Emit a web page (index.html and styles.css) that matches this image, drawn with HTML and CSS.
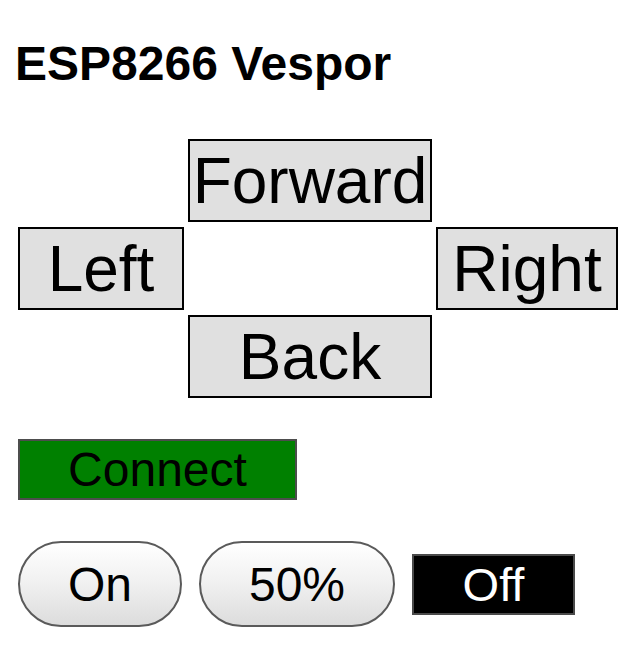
FILE: index.html
```html
<!DOCTYPE html>
<html>
<head>
<meta charset="utf-8">
<title>ESP8266 Vespor</title>
<link rel="stylesheet" href="styles.css">
</head>
<body>
<h1 class="title">ESP8266 Vespor</h1>
<div class="dpad">
  <span class="cell"></span>
  <button class="dir">Forward</button>
  <span class="cell"></span>
  <button class="dir">Left</button>
  <span class="cell"></span>
  <button class="dir">Right</button>
  <span class="cell"></span>
  <button class="dir">Back</button>
  <span class="cell"></span>
</div>
<button class="connect">Connect</button>
<div class="row">
  <button class="pill pill-on">On</button>
  <button class="pill pill-half">50%</button>
  <button class="off">Off</button>
</div>
</body>
</html>
```
FILE: styles.css
```css
html, body {
  margin: 0;
  padding: 0;
  background: #ffffff;
}
body {
  padding: 0 18px;
  font-family: "Liberation Sans", Arial, sans-serif;
  color: #000;
}
.title {
  margin: 36px 0 0 -3px;
  font-size: 48px;
  line-height: 55px;
  font-weight: bold;
}
button {
  font-family: "Liberation Sans", Arial, sans-serif;
  margin: 0;
  padding: 0;
  display: flex;
  align-items: center;
  justify-content: center;
  box-sizing: border-box;
  line-height: normal;
}
.dpad {
  margin-top: 48px;
  display: grid;
  grid-template-columns: 166px 244px 182px;
  grid-template-rows: 83px 83px 83px;
  column-gap: 4px;
  row-gap: 5px;
}
.dir {
  background: #e0e0e0;
  border: 2px solid #000;
  color: #000;
  font-size: 64px;
  width: 100%;
  height: 100%;
}
.connect {
  margin-top: 41px;
  width: 279px;
  height: 61px;
  background: #008000;
  border: 2px solid #4d4d4d;
  color: #000;
  font-size: 48px;
}
.row {
  margin-top: 41px;
  display: flex;
  align-items: center;
  gap: 17px;
}
.pill {
  height: 86px;
  border: 2px solid #5a5a5a;
  border-radius: 43px;
  background: linear-gradient(to bottom, #ffffff 0%, #f0f0f0 50%, #dcdcdc 100%);
  color: #000;
  font-size: 48px;
}
.pill-on {
  width: 164px;
}
.pill-half {
  width: 196px;
}
.off {
  width: 163px;
  height: 61px;
  background: #000;
  border: 2px solid #4a4a4a;
  color: #fff;
  font-size: 47px;
}
```
